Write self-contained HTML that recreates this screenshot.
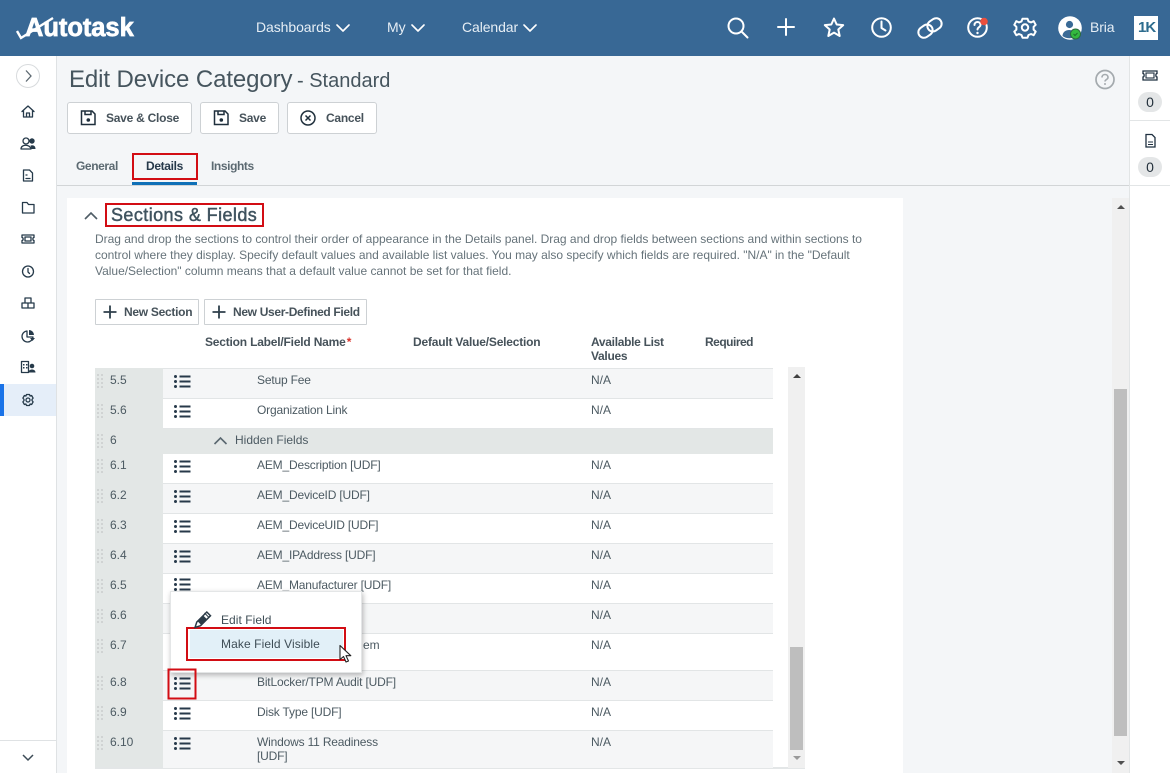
<!DOCTYPE html>
<html><head><meta charset="utf-8"><style>
*{box-sizing:border-box}
html,body{margin:0;padding:0;width:1170px;height:773px;overflow:hidden;background:#f4f6f8;font-family:"Liberation Sans",sans-serif}
.a{position:absolute;white-space:nowrap}
svg{position:absolute;overflow:visible}
.btn{position:absolute;background:#fff;border:1px solid #cdd1d4;border-radius:3px}
.b{font-weight:700;font-size:12px;color:#46525a;letter-spacing:-.25px}
.row{position:absolute;left:163px;width:610px;border-bottom:1px solid #e2e5e6}
.c{position:absolute;font-size:12px;color:#4c5a62;white-space:nowrap}
.num{left:110px;margin-top:1px}.fn{left:257px;margin-top:1px;letter-spacing:-.18px}.na{left:591px;margin-top:1px}
.hd{position:absolute;font-size:12px;font-weight:700;color:#46525a;white-space:nowrap}
.ts{fill:none;stroke:#fff;stroke-width:2;stroke-linecap:round;stroke-linejoin:round}
.nv{fill:none;stroke:#263a4a;stroke-width:1.3;stroke-linecap:round;stroke-linejoin:round}
</style></head><body>
<!-- top bar -->
<div class="a" style="left:0;top:0;width:1170px;height:56px;background:#386895"></div>
<div class="a" style="left:25px;top:13px;font-size:25.500px;font-weight:700;color:#fff;letter-spacing:-.05px;line-height:30px;-webkit-text-stroke:.7px #fff">Autotask</div>
<svg style="left:0;top:0" width="60" height="56"><path d="M17 31l4 7 L53 18" fill="none" stroke="#fff" stroke-width="2.400"/></svg>
<div class="a" style="left:256px;top:19px;font-size:14px;color:#e6eef5;line-height:16px;letter-spacing:-.08px">Dashboards</div>
<div class="a" style="left:387px;top:19px;font-size:14px;color:#e6eef5;line-height:16px">My</div>
<div class="a" style="left:462px;top:19px;font-size:14px;color:#e6eef5;line-height:16px;letter-spacing:-.1px">Calendar</div>
<svg style="left:0;top:0" width="1170" height="56">
<path class="ts" stroke-width="1.800" d="M337 25l6 6 6-6M412 25l6 6 6-6M524 25l6 6 6-6" style="stroke-width:1.600"/>
<circle class="ts" cx="736" cy="26" r="7.500"/><path class="ts" d="M742 32l5.500 5.500"/>
<path class="ts" d="M786 19v16M778 27h16"/>
<path class="ts" d="M834 18.500l2.700 6 6.500.6-4.900 4.400 1.400 6.500-5.700-3.400-5.700 3.400 1.400-6.500-4.900-4.400 6.500-.6z"/>
<circle class="ts" cx="881.500" cy="27.500" r="9.300"/><path class="ts" d="M881.500 21.500v6.500l4 2.500"/>
<g transform="rotate(-35 930 28)"><rect class="ts" x="917" y="22.500" width="15" height="11" rx="5.500"/><rect class="ts" x="928" y="22.500" width="15" height="11" rx="5.500"/></g>
<circle class="ts" cx="977.500" cy="27.500" r="9.300"/>
<path class="ts" d="M974.500 25c0-4 6-4 6 0 0 2-3 2.300-3 4.500"/><circle cx="977.500" cy="33" r="1.200" fill="#fff"/>
<circle cx="984" cy="21.500" r="3.800" fill="#ea4f3d"/>
<circle class="ts" cx="1025" cy="27.500" r="3.200"/>
<path class="ts" d="M1022.500 18.500h5l1 2.700 2.600 1 2.600-1.200 2 3.600-2.100 2 0 2.800 2.100 2-2 3.600-2.600-1.200-2.600 1-1 2.700h-5l-1-2.700-2.600-1-2.600 1.200-2-3.600 2.100-2v-2.800l-2.100-2 2-3.600 2.600 1.200 2.600-1z" transform="translate(0 .2)"/>
<circle cx="1070" cy="28" r="11.800" fill="#fff"/><circle cx="1069.500" cy="24.500" r="3.600" fill="#3a6a96"/><path d="M1062.500 36c0-8 13-8 14 0-4 3-10 3-14 0z" fill="#3a6a96"/>
<circle cx="1075.500" cy="34" r="5" fill="#33b93f" stroke="#2d6a40"/><path d="M1073.500 34l1.500 1.500 2.500-2.500" fill="none" stroke="#1f6d2a"/>
<rect x="1134" y="16" width="24" height="24" fill="#fff"/>
</svg>
<div class="a" style="left:1090px;top:19px;font-size:14px;color:#e6eef5;line-height:16px;letter-spacing:-.1px">Bria</div>
<div class="a" style="left:1138px;top:20px;font-size:15px;font-weight:700;color:#2d6c8e;line-height:16px;letter-spacing:-1px">1K</div>

<!-- left nav -->
<div class="a" style="left:0;top:56px;width:57px;height:717px;background:#fff;border-right:1px solid #dfe2e4"></div>
<div class="a" style="left:16px;top:64px;width:24px;height:24px;border:1px solid #d8dbdd;border-radius:50%;background:#fff"></div>
<div class="a" style="left:0;top:384px;width:56px;height:32px;background:#e5eef9"></div>
<div class="a" style="left:0;top:384px;width:4px;height:32px;background:#1a73e8"></div>
<div class="a" style="left:0;top:740px;width:56px;height:1px;background:#dfe2e4"></div>
<svg style="left:0;top:0" width="57" height="773">
<path d="M26 70.500l5 5.500-5 5.500" fill="none" stroke="#5c6870" stroke-width="1.300"/>
<path class="nv" d="M22 111.500l6-5.500 6 5.500M23.500 110.500v6.500h9v-6.500M26.500 117v-4h3v4"/>
<circle class="nv" cx="26" cy="141" r="3"/><path class="nv" d="M21 149c0-5 9-5 10 0z"/><circle cx="32" cy="141" r="2.700" fill="#263a4a"/><path d="M30.500 145.500c3-1 5 .5 5 3.500h-4z" fill="#263a4a"/>
<path class="nv" d="M23.500 170h6l3 3v8h-9zM26 178.500h4M26 175h1"/>
<path class="nv" d="M22.500 202.500h4.500l1.500 2h5.500v8.500h-11.500z"/>
<path class="nv" d="M22 235h12v2.500c-1.500 0-1.500 3 0 3v2.500h-12v-2.500c1.500 0 1.500-3 0-3z"/><rect x="25" y="237" width="6" height="4" class="nv"/>
<circle class="nv" cx="28" cy="271.500" r="5.500"/><path class="nv" d="M28 268.500v3.500l1.500 1.500"/>
<path class="nv" d="M25 298h6v5h-6zM22 303h6v5h-6zM28 303h6v5h-6z"/>
<path class="nv" d="M27 331a5.500 5.500 0 1 0 6 6h-6z"/><path d="M29 330a5 5 0 0 1 5 5h-5zM30 338h5l-2.500 3z" fill="#263a4a"/>
<path class="nv" d="M21.500 361.500h7v11h-7z"/><path d="M23 364h1.500v1.500H23zM26 364h1.500v1.500H26zM23 367h1.500v1.500H23zM26 367h1.500v1.500H26z" fill="#263a4a"/><circle cx="32" cy="366" r="2.300" fill="#263a4a"/><path d="M28.500 372.500c0-4 7-4 7 0z" fill="#263a4a"/>
<circle class="nv" cx="28" cy="400" r="2"/><path class="nv" d="M26.500 394.500h3l.6 1.500 1.500-.5 1.500 2.600-1.100 1.400v1l1.100 1.400-1.500 2.600-1.500-.5-.6 1.500h-3l-.6-1.500-1.500.5-1.500-2.600 1.100-1.400v-1l-1.100-1.400 1.500-2.600 1.500.5z"/>
<path d="M23 755l5 5 5-5" fill="none" stroke="#3c4b56" stroke-width="1.500"/>
</svg>

<!-- right panel -->
<div class="a" style="left:1129px;top:56px;width:41px;height:717px;background:#fff;border-left:1px solid #e2e5e6"></div>
<div class="a" style="left:1130px;top:120px;width:40px;height:1px;background:#e2e5e6"></div>
<div class="a" style="left:1130px;top:185px;width:40px;height:1px;background:#e2e5e6"></div>
<svg style="left:0;top:0" width="1170" height="190">
<path d="M1143 71h14v2.500c-1.500 0-1.500 3.500 0 3.500v3h-14v-3c1.500 0 1.500-3.500 0-3.500z" fill="none" stroke="#1f3040" stroke-width="1.300"/><rect x="1146" y="73" width="8" height="5" fill="none" stroke="#1f3040" stroke-width="1.100"/>
<path d="M1146 134.500h6l3 3v9.500h-9z" fill="none" stroke="#1f3040" stroke-width="1.300"/><path d="M1148 142h5M1148 144.500h5" fill="none" stroke="#1f3040" stroke-width=".9"/>
<circle cx="1105" cy="79.500" r="9" fill="none" stroke="#a4aaae" stroke-width="1.700"/><path d="M1102 77.500c0-4 6-4 6 0 0 2-3 2-3 4" fill="none" stroke="#a4aaae" stroke-width="1.600"/><circle cx="1105" cy="84" r="1" fill="#a4aaae"/>
</svg>
<div class="a" style="left:1138px;top:92px;width:24px;height:20px;border-radius:10px;background:#e4e6e7;text-align:center;font-size:14px;line-height:20px;color:#24313c">0</div>
<div class="a" style="left:1138px;top:157px;width:24px;height:20px;border-radius:10px;background:#e4e6e7;text-align:center;font-size:14px;line-height:20px;color:#24313c">0</div>

<!-- title -->
<div class="a" style="left:69px;top:65px;font-size:24px;color:#46555e;line-height:30px;letter-spacing:-.1px">Edit Device Category</div>
<div class="a" style="left:297px;top:69px;font-size:20px;color:#46555e;line-height:24px">- Standard</div>
<div class="btn" style="left:67px;top:102px;width:125px;height:32px"></div>
<div class="btn" style="left:200px;top:102px;width:79px;height:32px"></div>
<div class="btn" style="left:287px;top:102px;width:90px;height:32px"></div>
<div class="a b" style="left:106px;top:110px;line-height:16px">Save &amp; Close</div>
<div class="a b" style="left:239px;top:110px;line-height:16px">Save</div>
<div class="a b" style="left:326px;top:110px;line-height:16px">Cancel</div>
<svg style="left:0;top:0" width="400" height="140">
<g fill="none" stroke="#1f2f3c" stroke-width="1.500"><path d="M81.500 111h10.500l3 3v10.500h-13.500z"/><path d="M85 111v3.500h6V111"/>
<path d="M214.500 111h10.500l3 3v10.500h-13.500z"/><path d="M218 111v3.500h6V111"/><circle cx="308" cy="118" r="7"/><path d="M305.500 115.500l5 5M310.500 115.500l-5 5"/></g>
<circle cx="88.300" cy="120" r="1.800" fill="#1f2f3c"/><circle cx="221.300" cy="120" r="1.800" fill="#1f2f3c"/>
</svg>

<!-- tabs -->
<div class="a b" style="left:76px;top:158px;line-height:16px;color:#5c6a72;letter-spacing:-.4px">General</div>
<div class="a b" style="left:146px;top:158px;line-height:16px;color:#26394a;letter-spacing:-.35px">Details</div>
<div class="a b" style="left:211px;top:158px;line-height:16px;color:#5c6a72;letter-spacing:-.4px">Insights</div>
<div class="a" style="left:57px;top:185px;width:1072px;height:1px;background:#d2d5d7"></div>
<div class="a" style="left:132px;top:182px;width:65px;height:3px;background:#0f70b7"></div>
<div class="a" style="left:132px;top:153px;width:66px;height:27px;border:2px solid #d20d14"></div>

<!-- main scrollbar -->
<div class="a" style="left:1112px;top:198px;width:17px;height:575px;background:#f0f0f0"></div>
<div class="a" style="left:1114px;top:389px;width:13px;height:347px;background:#bebebe"></div>
<svg style="left:0;top:0" width="1170" height="773"><path d="M1117 209l4-4 4 4zM1117 761h8l-4 4z" fill="#505050"/></svg>

<!-- white panel -->
<div class="a" style="left:67px;top:198px;width:836px;height:575px;background:#fff"></div>
<svg style="left:0;top:0" width="120" height="230"><path d="M85 219l6-6 6 6" fill="none" stroke="#4f5d66" stroke-width="1.600"/></svg>
<div class="a" style="left:105px;top:203px;width:159px;height:24px;border:2px solid #d20d14"></div>
<div class="a" style="left:111px;top:204px;font-size:18px;color:#3f535f;line-height:22px;letter-spacing:.42px;-webkit-text-stroke:.45px #3f535f">Sections &amp; Fields</div>
<div class="a" style="left:95px;top:231px;font-size:12px;line-height:16px;color:#66737a;letter-spacing:-.015px">Drag and drop the sections to control their order of appearance in the Details panel. Drag and drop fields between sections and within sections to<br>control where they display. Specify default values and available list values. You may also specify which fields are required. "N/A" in the "Default<br>Value/Selection" column means that a default value cannot be set for that field.</div>

<div class="btn" style="left:95px;top:299px;width:104px;height:26px;border-radius:1px"></div>
<div class="btn" style="left:204px;top:299px;width:163px;height:26px;border-radius:1px"></div>
<svg style="left:0;top:0" width="300" height="330"><path d="M110 305.500v13M103.500 312h13M219 305.500v13M212.500 312h13" stroke="#2e3f4b" stroke-width="1.800"/></svg>
<div class="a b" style="left:124px;top:304px;line-height:16px;letter-spacing:-.28px">New Section</div>
<div class="a b" style="left:233px;top:304px;line-height:16px;letter-spacing:-.33px">New User-Defined Field</div>
<div class="hd" style="left:205px;top:334px;line-height:16px;letter-spacing:-.2px">Section Label/Field Name <span style="color:#d9332b;margin-left:-2px">*</span></div>
<div class="hd" style="left:413px;top:334px;line-height:16px;letter-spacing:-.2px">Default Value/Selection</div>
<div class="hd" style="left:591px;top:335px;line-height:14px;letter-spacing:-.3px">Available List<br>Values</div>
<div class="hd" style="left:705px;top:334px;line-height:16px;letter-spacing:-.5px">Required</div>

<!-- table -->
<div class="a" style="left:95px;top:368px;width:68px;height:400px;background:#e3e7e6"></div>
<div class="a" style="left:95px;top:767px;width:710px;height:2px;background:#e3e6e7"></div>
<div class="row" style="top:368px;height:31px;background:#f5f6f7;border-top:1px solid #e2e5e6"></div>
<div class="row" style="top:399px;height:30px;background:#fff"></div>
<div class="row" style="top:429px;height:25px;background:#e3e7e6;border:0"></div>
<div class="row" style="top:454px;height:30px;background:#fff"></div>
<div class="row" style="top:484px;height:30px;background:#f5f6f7"></div>
<div class="row" style="top:514px;height:30px;background:#fff"></div>
<div class="row" style="top:544px;height:30px;background:#f5f6f7"></div>
<div class="row" style="top:574px;height:30px;background:#fff"></div>
<div class="row" style="top:604px;height:30px;background:#f5f6f7"></div>
<div class="row" style="top:634px;height:37px;background:#fff"></div>
<div class="row" style="top:671px;height:30px;background:#f5f6f7"></div>
<div class="row" style="top:701px;height:30px;background:#fff"></div>
<div class="row" style="top:731px;height:37px;background:#f5f6f7;border:0"></div>

<div class="c num" style="top:372px">5.5</div><div class="c fn" style="top:372px">Setup Fee</div><div class="c na" style="top:372px">N/A</div>
<div class="c num" style="top:402px">5.6</div><div class="c fn" style="top:402px">Organization Link</div><div class="c na" style="top:402px">N/A</div>
<div class="c num" style="top:432px">6</div><div class="c" style="left:235px;top:433px">Hidden Fields</div>
<div class="c num" style="top:457px">6.1</div><div class="c fn" style="top:457px">AEM_Description [UDF]</div><div class="c na" style="top:457px">N/A</div>
<div class="c num" style="top:487px">6.2</div><div class="c fn" style="top:487px">AEM_DeviceID [UDF]</div><div class="c na" style="top:487px">N/A</div>
<div class="c num" style="top:517px">6.3</div><div class="c fn" style="top:517px">AEM_DeviceUID [UDF]</div><div class="c na" style="top:517px">N/A</div>
<div class="c num" style="top:547px">6.4</div><div class="c fn" style="top:547px">AEM_IPAddress [UDF]</div><div class="c na" style="top:547px">N/A</div>
<div class="c num" style="top:577px">6.5</div><div class="c fn" style="top:577px">AEM_Manufacturer [UDF]</div><div class="c na" style="top:577px">N/A</div>
<div class="c num" style="top:607px">6.6</div><div class="c na" style="top:607px">N/A</div>
<div class="c num" style="top:637px">6.7</div><div class="c" style="left:363px;top:638px">em</div><div class="c na" style="top:637px">N/A</div>
<div class="c num" style="top:674px">6.8</div><div class="c fn" style="top:674px">BitLocker/TPM Audit [UDF]</div><div class="c na" style="top:674px">N/A</div>
<div class="c num" style="top:704px">6.9</div><div class="c fn" style="top:704px">Disk Type [UDF]</div><div class="c na" style="top:704px">N/A</div>
<div class="c num" style="top:734px">6.10</div><div class="c fn" style="top:734px;line-height:14px">Windows 11 Readiness<br>[UDF]</div><div class="c na" style="top:734px">N/A</div>

<svg style="left:0;top:0" width="220" height="773">
<defs>
<g id="l"><path d="M179.500 1.500h11M179.500 6.500h11M179.500 11.500h11" stroke="#27394a" stroke-width="1.900" fill="none"/><circle cx="175.500" cy="1.500" r="1.500" fill="#27394a"/><circle cx="175.500" cy="6.500" r="1.500" fill="#27394a"/><circle cx="175.500" cy="11.500" r="1.500" fill="#27394a"/></g>
<g id="d" fill="#d0d3d3"><rect x="97" y="0" width="2" height="2"/><rect x="101" y="0" width="2" height="2"/><rect x="97" y="4" width="2" height="2"/><rect x="101" y="4" width="2" height="2"/><rect x="97" y="8" width="2" height="2"/><rect x="101" y="8" width="2" height="2"/><rect x="97" y="12" width="2" height="2"/><rect x="101" y="12" width="2" height="2"/></g>
</defs>
<use href="#l" y="375"/><use href="#l" y="405"/><use href="#l" y="460"/><use href="#l" y="490"/><use href="#l" y="520"/><use href="#l" y="550"/><use href="#l" y="578"/><use href="#l" y="677"/><use href="#l" y="707"/><use href="#l" y="737"/>
<use href="#d" y="374"/><use href="#d" y="404"/><use href="#d" y="434"/><use href="#d" y="459"/><use href="#d" y="489"/><use href="#d" y="519"/><use href="#d" y="549"/><use href="#d" y="579"/><use href="#d" y="609"/><use href="#d" y="639"/><use href="#d" y="676"/><use href="#d" y="706"/><use href="#d" y="736"/>
<path d="M214.500 444l6-6 6 6" fill="none" stroke="#5a6870" stroke-width="1.600"/>
</svg>

<!-- inner scrollbar -->
<div class="a" style="left:788px;top:367px;width:17px;height:401px;background:#f0f0f0"></div>
<div class="a" style="left:790px;top:647px;width:13px;height:103px;background:#bebebe"></div>
<svg style="left:0;top:0" width="820" height="773"><path d="M793 378l4-4 4 4z" fill="#404040"/><path d="M793 756h8l-4 4z" fill="#9a9a9a"/></svg>

<!-- popup -->
<div class="a" style="left:170px;top:591px;width:192px;height:82px;background:#fff;border:1px solid #e4e6e7;box-shadow:1px 2px 5px rgba(0,0,0,.28)"></div>
<div class="a" style="left:190px;top:630px;width:153px;height:28px;background:#e2f0f8"></div>
<div class="a" style="left:186px;top:627px;width:160px;height:34px;border:2px solid #d20d14"></div>
<div class="c" style="left:221px;top:613px;color:#3e4d56;letter-spacing:.05px">Edit Field</div>
<div class="c" style="left:221px;top:637px;color:#3e4d56;letter-spacing:.1px">Make Field Visible</div>
<svg style="left:0;top:0" width="400" height="773">
<path d="M195 627.500l1.800-5.500 10-10 3.700 3.700-10 10z" fill="#fff" stroke="#2c3c48" stroke-width="1.500"/><path d="M198 621l5-5 3.500 3.500-5 5zM204.500 613l4.500 4.500" fill="#2c3c48" stroke="#2c3c48"/>
<path d="M340 645.500v14l3.500-3 2.500 5.500 2.500-1-2.500-5.300h4.800z" fill="#fff" stroke="#222" stroke-width="1.100" stroke-linejoin="round"/>
<rect x="168.500" y="669.500" width="27" height="29" fill="none" stroke="#d20d14" stroke-width="2"/>
</svg>
</body></html>
